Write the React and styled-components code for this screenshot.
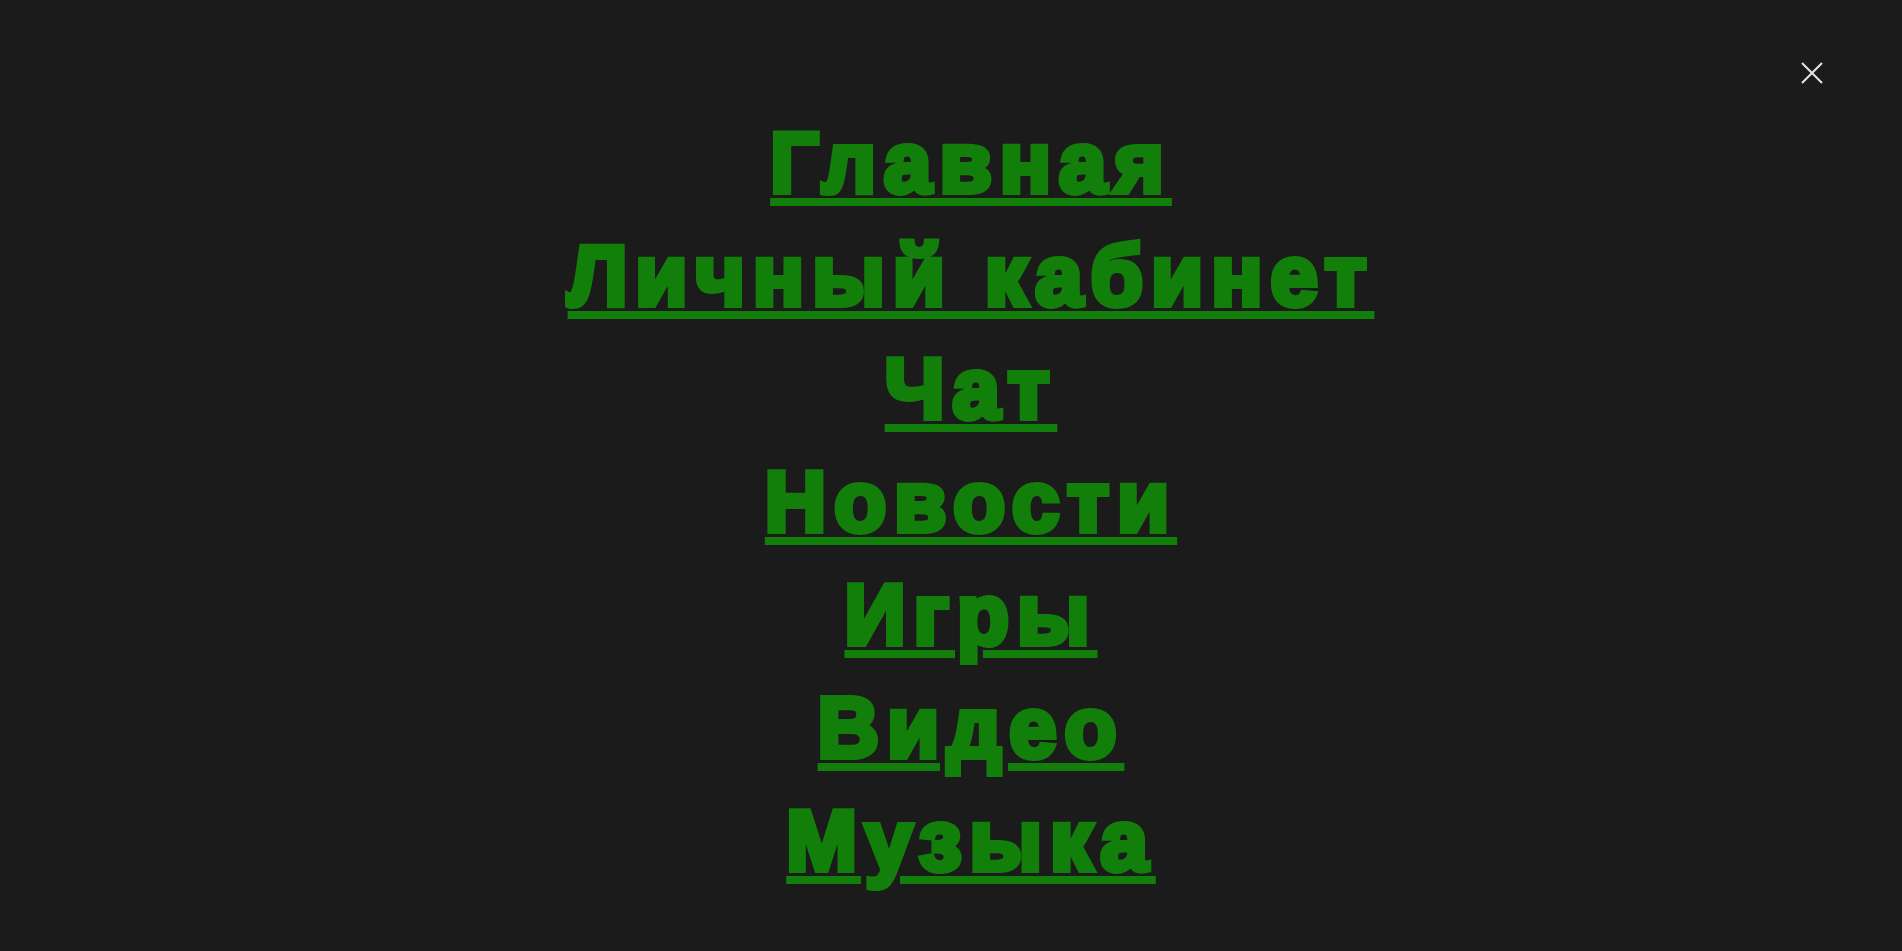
import React from "react";
import styled, { createGlobalStyle } from "styled-components";

const GlobalStyle = createGlobalStyle`
  html, body {
    margin: 0;
    padding: 0;
    background: #1b1b1b;
  }
`;

const Overlay = styled.nav`
  position: relative;
  width: 100%;
  height: 951px;
  background: #1b1b1b;
  box-sizing: border-box;
  padding-top: 106px;
  font-family: "Liberation Sans", Arial, sans-serif;
`;

const CloseButton = styled.button`
  position: absolute;
  top: 60px;
  right: 77px;
  width: 26px;
  height: 26px;
  padding: 0;
  border: none;
  background: transparent;
  cursor: pointer;
  display: flex;
  align-items: center;
  justify-content: center;
`;

const Menu = styled.ul`
  list-style: none;
  margin: 0;
  padding: 0 0 0 40px;
  display: flex;
  flex-direction: column;
  align-items: center;
`;

const Item = styled.li`
  height: 113px;
  line-height: 113px;
`;

const Link = styled.a`
  color: #137f0b;
  -webkit-text-stroke: 6px #137f0b;
  font-size: 85px;
  font-weight: 700;
  letter-spacing: 8px;
  text-decoration: underline;
  text-decoration-thickness: 8px;
  text-underline-offset: 6px;
  white-space: nowrap;
`;

const items = [
  "Главная",
  "Личный кабинет",
  "Чат",
  "Новости",
  "Игры",
  "Видео",
  "Музыка",
];

export default function App() {
  return (
    <>
      <GlobalStyle />
      <Overlay>
        <CloseButton aria-label="Закрыть">
          <svg width="24" height="24" viewBox="0 0 24 24">
            <path
              d="M2 2 L22 22 M22 2 L2 22"
              stroke="#e6e6e6"
              strokeWidth="2"
              fill="none"
            />
          </svg>
        </CloseButton>
        <Menu>
          {items.map((label) => (
            <Item key={label}>
              <Link href="#">{label}</Link>
            </Item>
          ))}
        </Menu>
      </Overlay>
    </>
  );
}
